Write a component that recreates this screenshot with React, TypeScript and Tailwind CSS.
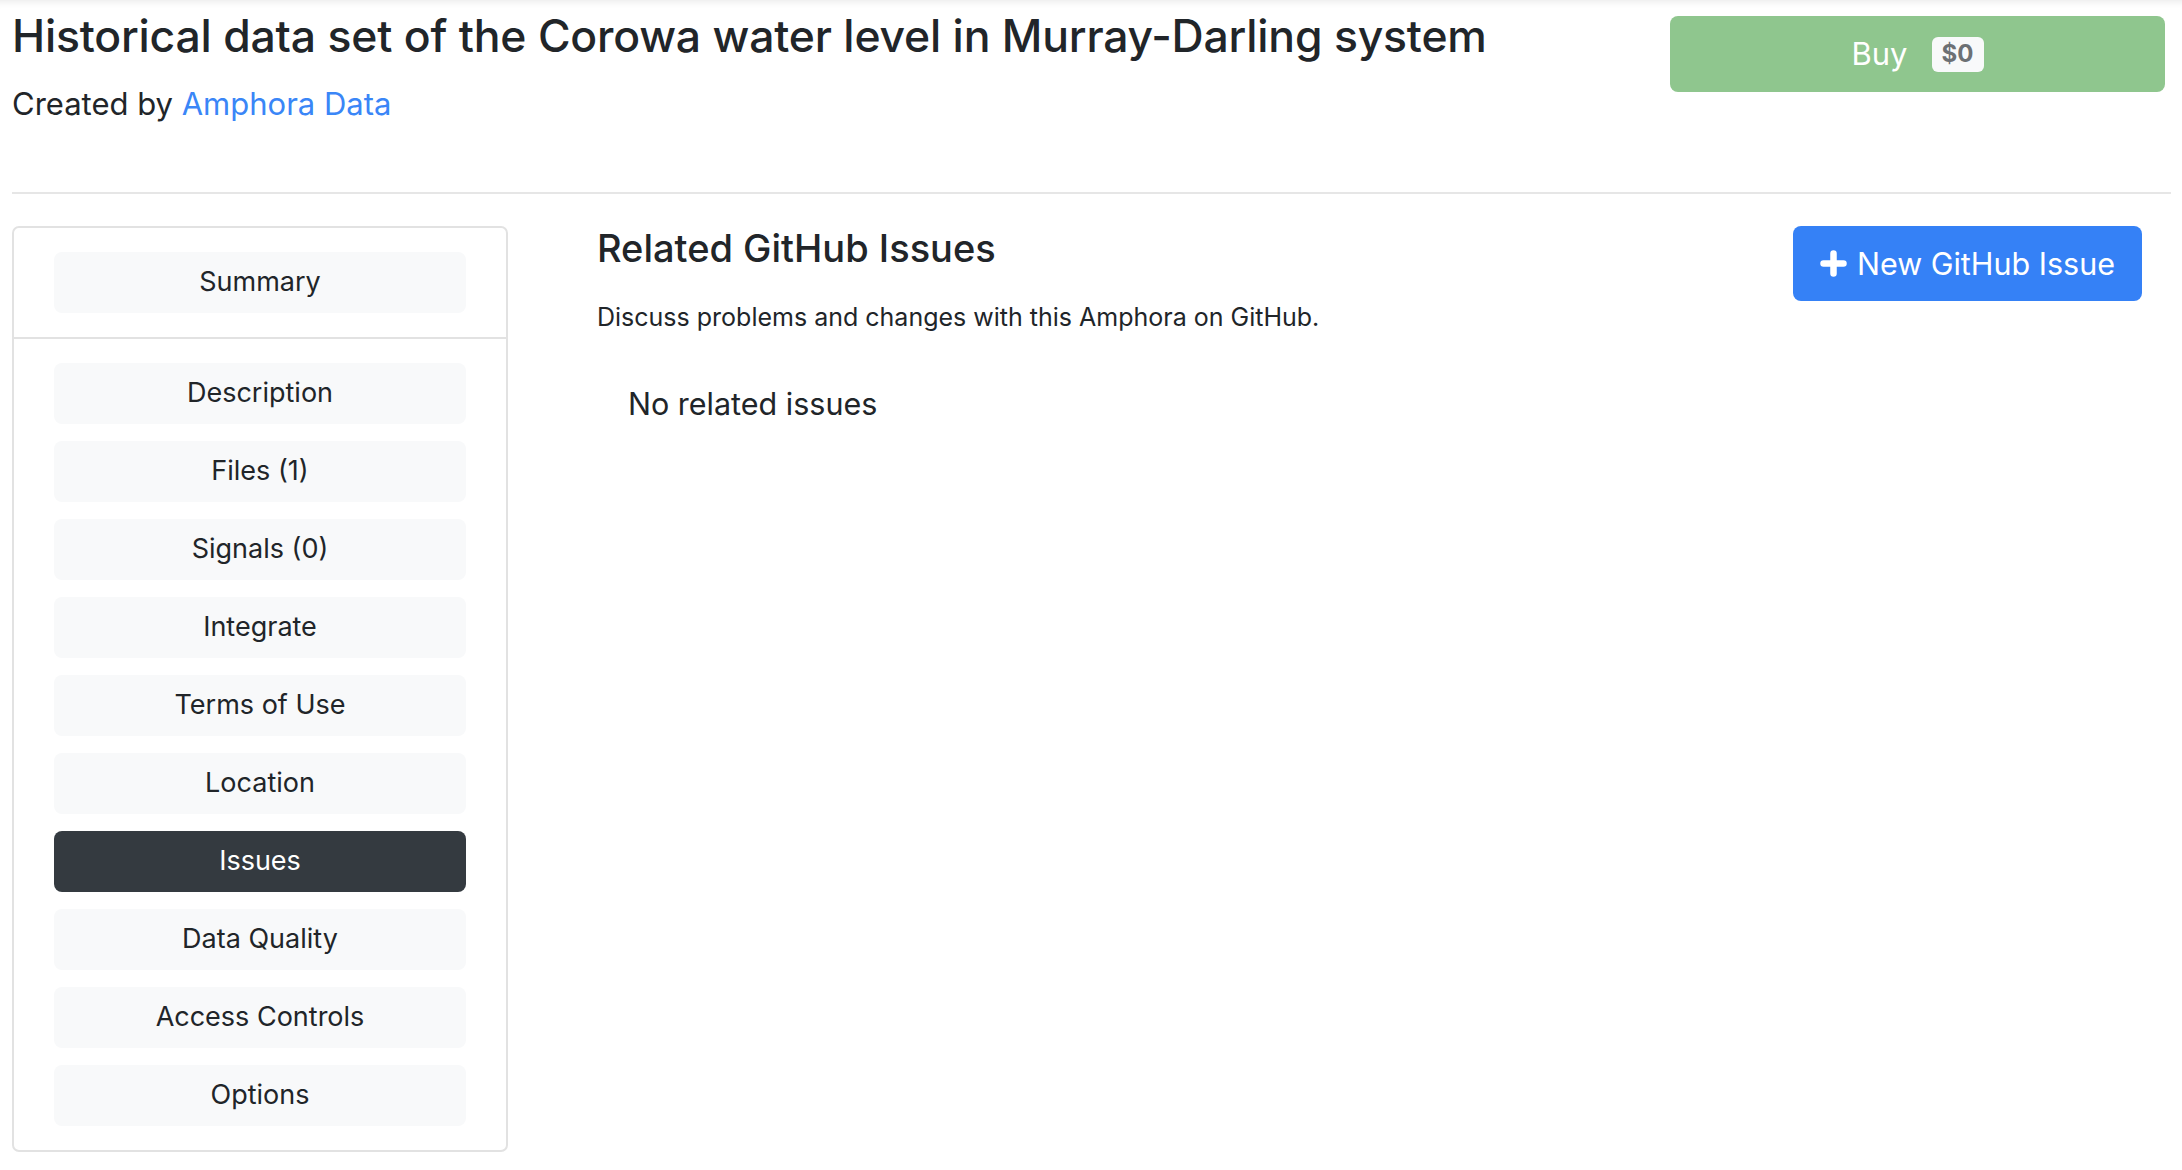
import React from "react";

const sections = [
    "Description",
    "Files (1)",
    "Signals (0)",
    "Integrate",
    "Terms of Use",
    "Location",
    "Issues",
    "Data Quality",
    "Access Controls",
    "Options",
];

function NavButton({label, active}: { label: string; active?: boolean }) {
    return (
        <button
            className={
                active
                    ? "h-[61px] w-full rounded-[8px] bg-[#343a40] text-[27px] text-white"
                    : "h-[61px] w-full rounded-[8px] bg-[#f8f9fa] text-[27px] text-[#212529]"
            }
        >
            {label}
        </button>
    );
}

function PlusIcon() {
    return (
        <svg width="27" height="27" viewBox="0 0 27 27" fill="none">
            <path d="M13.5 3.5v20M3.5 13.5h20" stroke="white" strokeWidth="6.5" strokeLinecap="round"/>
        </svg>
    );
}

export default function App() {
    return (
        <main
            className="min-h-screen w-full bg-white pl-[12px] pr-[11px] text-[#212529] shadow-[inset_0_10px_10px_-10px_rgba(0,0,0,0.12)]"
            style={{fontFamily: "Inter, 'Liberation Sans', sans-serif"}}
        >
            {/* header */}
            <div className="flex items-start justify-between">
                <div className="pt-[10px]">
                    <h1 className="text-[44.5px] font-medium leading-[1.2] tracking-[-0.2px]">
                        Historical data set of the Corowa water level in Murray-Darling system
                    </h1>
                    <p className="mt-[18px] text-[31px] leading-[1.5]">
                        Created by <a href="#" className="text-[#3a86f7]">Amphora Data</a>
                    </p>
                </div>
                <div className="pt-[16px] pr-[6px]">
                    <button
                        className="flex h-[76px] w-[495px] items-center justify-center gap-[24px] rounded-[8px] bg-[#8fc68e] text-[31px] text-white">
                        <span>Buy</span>
                        <span
                            className="flex h-[35px] w-[52px] items-center justify-center rounded-[6px] bg-[#f8f9fa] text-[24px] font-bold text-[#6c7074]">
                            $0
                        </span>
                    </button>
                </div>
            </div>

            <hr className="mt-[64px] border-t-2 border-[#e6e6e6]"/>

            {/* body */}
            <div className="mt-[32px] flex items-start pb-[18px]">
                <aside className="w-[496px] shrink-0 rounded-[7px] border-2 border-[#e2e2e2]">
                    <div className="border-b-2 border-[#e2e2e2] px-[40px] py-[24px]">
                        <NavButton label="Summary"/>
                    </div>
                    <div className="flex flex-col gap-[17px] px-[40px] py-[24px]">
                        {sections.map((s) => (
                            <NavButton key={s} label={s} active={s === "Issues"}/>
                        ))}
                    </div>
                </aside>

                <section className="ml-[89px] flex flex-1 items-start justify-between pr-[29px]">
                    <div>
                        <h4 className="text-[38px] font-medium leading-[1.2]">Related GitHub Issues</h4>
                        <p className="mt-[28px] text-[25px] leading-[1.5]">
                            Discuss problems and changes with this Amphora on GitHub.
                        </p>
                        <p className="ml-[31px] mt-[44px] text-[30.5px] leading-[1.5]">No related issues</p>
                    </div>
                    <button
                        className="flex h-[75px] items-center gap-[10px] rounded-[8px] bg-[#3581f6] px-[27px] text-[30.5px] text-white">
                        <PlusIcon/>
                        <span>New GitHub Issue</span>
                    </button>
                </section>
            </div>
        </main>
    );
}
